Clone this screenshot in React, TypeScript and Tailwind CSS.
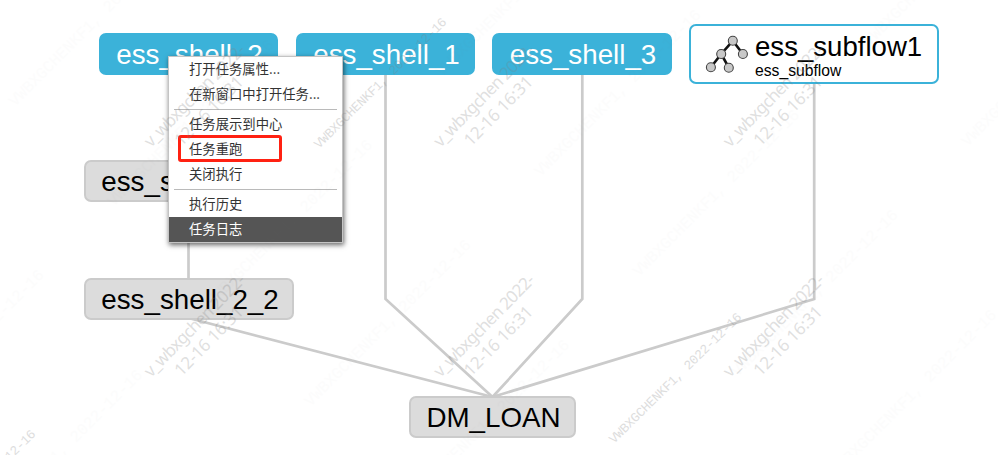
import React from "react";

type NodeProps = { label: string; place: string; tone: "blue" | "gray" };

function FlowNode({ label, place, tone }: NodeProps) {
  const colors =
    tone === "blue"
      ? "bg-[#3bb2d9] border-[#3bb2d9] text-white"
      : "bg-[#dcdcdc] border-[#cbcbcb] text-black";
  return (
    <div
      className={`absolute flex items-center justify-center whitespace-nowrap rounded-[7px] border-2 pt-px pl-[2px] text-[27.75px] leading-8 ${colors} ${place}`}
    >
      {label}
    </div>
  );
}

function Edges() {
  const edges = [
    "188.5,74 188.5,162",
    "188.5,200 188.5,280",
    "188.5,318 492.5,397",
    "385.5,74 385.5,299 492.5,397",
    "582.3,74 582.3,299 492.5,397",
    "814.2,82 814.2,299 492.5,397",
  ];
  return (
    <svg className="absolute inset-0" width="998" height="455" fill="none" stroke="#cbcbcb" strokeWidth="2.7">
      {edges.map((points) => (
        <polyline key={points} points={points} />
      ))}
    </svg>
  );
}

function SubflowIcon() {
  const dots = [
    [32.8, 10.8],
    [21.2, 24],
    [42.9, 24],
    [10.9, 37.2],
    [28.8, 37.7],
  ];
  return (
    <svg width="55" height="48" className="shrink-0">
      <path d="M42.9 24 32.8 10.8 21.2 24 10.9 37.2M21.2 24 28.8 37.7" fill="none" stroke="#111" strokeWidth="2.6" />
      {dots.map(([x, y]) => (
        <circle key={x} cx={x} cy={y} r="4.5" fill="#c8c8c8" stroke="#444" strokeWidth="1.1" />
      ))}
    </svg>
  );
}

function SubflowNode() {
  return (
    <div className="absolute left-[689px] top-[24px] flex h-[60px] w-[250px] rounded-[7px] border-[2.5px] border-[#3bb2d9] bg-white pl-[9px] pt-[4px] text-black">
      <SubflowIcon />
      <div className="flex flex-col whitespace-nowrap pt-px">
        <span className="h-[31px] text-[27.6px] leading-8">ess_subflow1</span>
        <span className="text-[15.7px] leading-[18px]">ess_subflow</span>
      </div>
    </div>
  );
}

function MenuItem({ label, active, marked }: { label: string; active?: boolean; marked?: boolean }) {
  return (
    <div
      className={`relative h-[25px] whitespace-nowrap pl-5 text-[13.33px] leading-[23px] ${
        active ? "bg-[#555555] text-white" : "text-[#333]"
      }`}
    >
      {label}
      {marked && (
        <div className="absolute left-[9px] top-[-2px] h-[27px] w-[104px] rounded-[3px] border-[3px] border-[#ff2112]" />
      )}
    </div>
  );
}

function Separator() {
  return (
    <div className="mx-[5px] h-[5px] py-[2px]">
      <div className="h-px bg-[#bababa]" />
    </div>
  );
}

function ContextMenu() {
  return (
    <div className="absolute left-[168px] top-[56px] w-[175px] border border-[#c4c4c4] bg-white font-['Noto_Sans_CJK_SC',sans-serif] shadow-[1px_2px_5px_rgba(0,0,0,0.6)]">
      <MenuItem label="打开任务属性..." />
      <MenuItem label="在新窗口中打开任务..." />
      <Separator />
      <MenuItem label="任务展示到中心" />
      <MenuItem label="任务重跑" marked />
      <MenuItem label="关闭执行" />
      <Separator />
      <MenuItem label="执行历史" />
      <MenuItem label="任务日志" active />
    </div>
  );
}

const userMarks = [151, 440.5, 730].flatMap((x) => [148, 378].map((y) => [x, y]));
const codeMarks = [
  [-92, 561],
  [319, 149],
  [614, 444],
];
const faintMarks = [-2, -1, 0, 1, 2, 3, 4]
  .flatMap((i) => [-2, -1, 0, 1, 2, 3, 4].map((j) => [212 + i * 98.5 + j * 230, 307 + i * 100 - j * 230]))
  .filter(([x, y]) => x > -150 && x < 990 && y > 5 && y < 600);
const codeText = "VWBXGCHENKF1, 2022-12-16";

function Watermarks() {
  return (
    <svg className="pointer-events-none absolute inset-0" width="998" height="455" fill="#808080">
      {userMarks.map(([x, y]) => (
        <g
          key={`${x}-${y}`}
          transform={`translate(${x} ${y}) rotate(-45.5)`}
          className="font-['Noto_Sans',sans-serif] text-[17px]"
          opacity="0.24"
        >
          <text textLength="136">v_wbxgchen 2022-</text>
          <text x="22" y="21" textLength="90">12-16 16:31</text>
        </g>
      ))}
      {codeMarks.map(([x, y]) => (
        <text
          key={`${x}-${y}`}
          transform={`translate(${x} ${y}) rotate(-44.5)`}
          textLength="180"
          opacity="0.26"
          className="font-['Liberation_Mono',monospace] text-[13px]"
        >
          {codeText}
        </text>
      ))}
      {faintMarks.map(([x, y]) => (
        <text
          key={`${x}-${y}`}
          transform={`translate(${x} ${y}) rotate(-45)`}
          textLength="228"
          opacity="0.018"
          className="font-['Liberation_Mono',monospace] text-[16px]"
        >
          {codeText}
        </text>
      ))}
    </svg>
  );
}

export default function App() {
  return (
    <div className="relative h-[455px] w-[998px] overflow-hidden bg-white font-['Liberation_Sans',Arial,sans-serif]">
      <Edges />
      <FlowNode tone="blue" label="ess_shell_2" place="left-[99px] top-[33px] h-[42px] w-[179px]" />
      <FlowNode tone="blue" label="ess_shell_1" place="left-[296px] top-[33px] h-[42px] w-[179px]" />
      <FlowNode tone="blue" label="ess_shell_3" place="left-[492px] top-[33px] h-[42px] w-[180px]" />
      <SubflowNode />
      <FlowNode tone="gray" label="ess_shell_2_1" place="left-[84px] top-[160px] h-[42px] w-[210px]" />
      <FlowNode tone="gray" label="ess_shell_2_2" place="left-[84px] top-[278px] h-[42px] w-[210px]" />
      <FlowNode tone="gray" label="DM_LOAN" place="left-[409px] top-[396px] h-[42px] w-[167px]" />
      <ContextMenu />
      <Watermarks />
    </div>
  );
}
